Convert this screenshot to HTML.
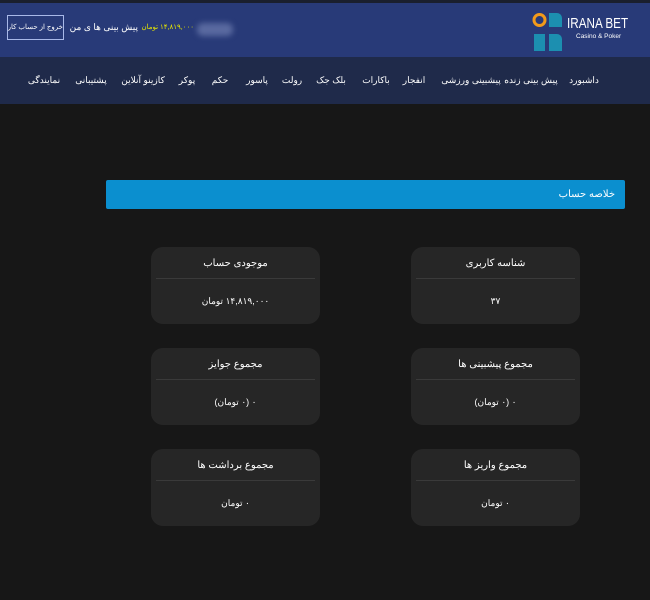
<!DOCTYPE html>
<html><head><meta charset="utf-8"><style>
*{margin:0;padding:0;box-sizing:border-box}
body{width:650px;height:600px;background:#171717;font-family:"Liberation Sans","Noto Sans CJK SC",sans-serif;position:relative;overflow:hidden;color:#fff}
.top{position:absolute;left:0;top:0;width:650px;height:3px;background:#1a1f2e}
.hdr{position:absolute;left:0;top:3px;width:650px;height:54px;background:#283a78}
.nav{position:absolute;left:0;top:57px;width:650px;height:47px;background:#1f2a4a}
.nav span{position:absolute;top:18px;font-size:9px;transform:translateX(-50%);white-space:nowrap;direction:rtl}
.btn{position:absolute;left:7px;top:12px;width:57px;height:25px;border:1px solid #a8b8e8;font-size:7px;text-align:center;line-height:23px;direction:rtl;white-space:nowrap;overflow:hidden;letter-spacing:-0.5px}
.bar{position:absolute;left:106px;top:180px;width:519px;height:29px;background:#0b8fcf;border-radius:2px;font-size:10px;line-height:29px;text-align:right;padding-right:10px;direction:rtl}
.card{position:absolute;width:169px;height:77px;background:#262626;border-radius:12px;text-align:center;font-size:10px;direction:rtl}
.card .t{height:32px;line-height:34px;border-bottom:1px solid #3a3a3a;margin:0 5px}
.card .v{line-height:44px;font-size:9px}
</style></head><body>
<div class="top"></div>
<div class="hdr">
 <div class="btn">خروج از حساب کاربری</div>
 <div style="position:absolute;left:72px;width:66px;text-align:center;top:19px;font-size:9px;direction:rtl;white-space:nowrap;letter-spacing:-0.3px">پیش بینی ها ی من</div>
 <div style="position:absolute;left:144px;width:50px;text-align:center;top:20px;font-size:7px;color:#e8e800;direction:rtl;white-space:nowrap;letter-spacing:-0.4px">۱۴,۸۱۹,۰۰۰ تومان</div>
 <div style="position:absolute;left:197px;top:20px;width:36px;height:13px;background:#5a6aa0;filter:blur(3px);border-radius:6px"></div>
 <svg style="position:absolute;left:532px;top:7px" width="32" height="44" viewBox="0 0 32 44">
  <circle cx="7.5" cy="10" r="5.5" fill="none" stroke="#f29a1a" stroke-width="3"/>
  <path d="M17 3h8a5 5 0 0 1 5 5v9h-13z" fill="#1c8fb0"/>
  <path d="M2 24h11v17H2z" fill="#1c8fb0"/>
  <path d="M17 24h8a5 5 0 0 1 5 5v12h-13z" fill="#1c8fb0"/>
 </svg>
 <div style="position:absolute;left:567px;top:12px;font-size:15px;transform:scaleX(0.78);transform-origin:left;white-space:nowrap">IRANA BET</div>
 <div style="position:absolute;left:576px;top:30px;font-size:6.5px;white-space:nowrap">Casino &amp; Poker</div>
</div>
<div class="nav">
 <span style="left:584px">داشبورد</span>
 <span style="left:531px">پیش بینی زنده</span>
 <span style="left:471px">پیشبینی ورزشی</span>
 <span style="left:414px">انفجار</span>
 <span style="left:376px">باکارات</span>
 <span style="left:331px">بلک جک</span>
 <span style="left:292px">رولت</span>
 <span style="left:257px">پاسور</span>
 <span style="left:220px">حکم</span>
 <span style="left:187px">پوکر</span>
 <span style="left:143px">کازینو آنلاین</span>
 <span style="left:91px">پشتیبانی</span>
 <span style="left:44px">نمایندگی</span>
</div>
<div class="bar">خلاصه حساب</div>
<div class="card" style="left:151px;top:247px"><div class="t">موجودی حساب</div><div class="v">۱۴,۸۱۹,۰۰۰ تومان</div></div>
<div class="card" style="left:411px;top:247px"><div class="t">شناسه کاربری</div><div class="v">۳۷</div></div>
<div class="card" style="left:151px;top:348px"><div class="t">مجموع جوایز</div><div class="v">۰ (۰ تومان)</div></div>
<div class="card" style="left:411px;top:348px"><div class="t">مجموع پیشبینی ها</div><div class="v">۰ (۰ تومان)</div></div>
<div class="card" style="left:151px;top:449px"><div class="t">مجموع برداشت ها</div><div class="v">۰ تومان</div></div>
<div class="card" style="left:411px;top:449px"><div class="t">مجموع واریز ها</div><div class="v">۰ تومان</div></div>
</body></html>
